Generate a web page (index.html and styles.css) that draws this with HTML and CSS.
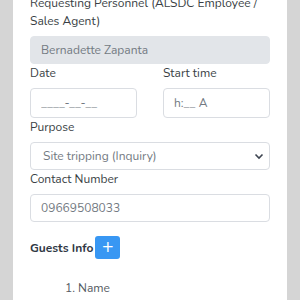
FILE: index.html
```html
<!DOCTYPE html>
<html lang="en">
  <head>
    <meta charset="UTF-8" />
    <title>Site Tripping Request</title>
    <meta name="viewport" content="width=device-width, initial-scale=1.0" />
    <link rel="stylesheet" href="styles.css">
  </head>
  <body>
    <div class="card">
      <div class="form-group">
        <label>Requesting Personnel (ALSDC Employee / Sales Agent)</label>
        <input type="text" class="form-control" value="Bernadette Zapanta" disabled />
      </div>
      <div class="row">
        <div class="form-group">
          <label>Date</label>
          <input type="text" class="form-control tall" placeholder="____-__-__" />
        </div>
        <div class="form-group">
          <label>Start time</label>
          <input type="text" class="form-control tall" placeholder="h:__ A" />
        </div>
      </div>
      <div class="form-group">
        <label>Purpose</label>
        <div class="select-wrap">
          <select class="form-control">
            <option>Site tripping (Inquiry)</option>
          </select>
          <svg class="chevron" width="10" height="7" viewBox="0 0 10 7">
            <path d="M1.5 1.5 L5 5 L8.5 1.5" fill="none" stroke="#3d4450" stroke-width="1.6" />
          </svg>
        </div>
      </div>
      <div class="form-group">
        <label>Contact Number</label>
        <input type="text" class="form-control" value="09669508033" />
      </div>
      <div class="guests">
        <strong>Guests Info</strong>
        <button class="btn-add">+</button>
      </div>
      <ol class="guest-list">
        <li>Name</li>
      </ol>
    </div>
  </body>
</html>
```
FILE: styles.css
```css
body {
  margin: 0;
  background: #d5d5d5;
  font-family: 'Nunito', 'Lato', sans-serif;
  font-size: 12px;
  line-height: 18px;
  color: #3a3f45;
}

.card {
  background: #ffffff;
  margin: -6px 13px 0;
  padding: 0 17px 20px;
  min-height: 320px;
}

.form-group label {
  display: block;
  margin-bottom: 6px;
}

.form-control {
  display: block;
  width: 100%;
  box-sizing: border-box;
  height: 28px;
  padding: 0 10px;
  border: 1px solid #dadde2;
  border-radius: 4px;
  background: #ffffff;
  font-family: inherit;
  font-size: 12px;
  color: #737a82;
  outline: none;
}

.form-control.tall {
  height: 30px;
}

.form-control::placeholder {
  color: #737a82;
}

.form-control:disabled {
  background: #e2e5e9;
  border-color: #e2e5e9;
}

.row {
  display: grid;
  grid-template-columns: 1fr 1fr;
  column-gap: 26px;
}

.select-wrap {
  position: relative;
}

select.form-control {
  appearance: none;
  padding-left: 12px;
}

.chevron {
  position: absolute;
  right: 6px;
  top: 11px;
}

.guests {
  display: flex;
  align-items: center;
  gap: 2px;
  margin-top: 14px;
}

.guests strong {
  color: #2f3744;
  font-weight: 700;
}

.btn-add {
  width: 25px;
  height: 23px;
  padding: 0;
  border: none;
  border-radius: 3px;
  background: #3897f3;
  color: #ffffff;
  font-size: 15px;
  line-height: 23px;
  font-family: 'DejaVu Sans', sans-serif;
}

.guest-list {
  margin: 20px 0 0;
  padding-left: 48px;
  color: #555b62;
}
```
